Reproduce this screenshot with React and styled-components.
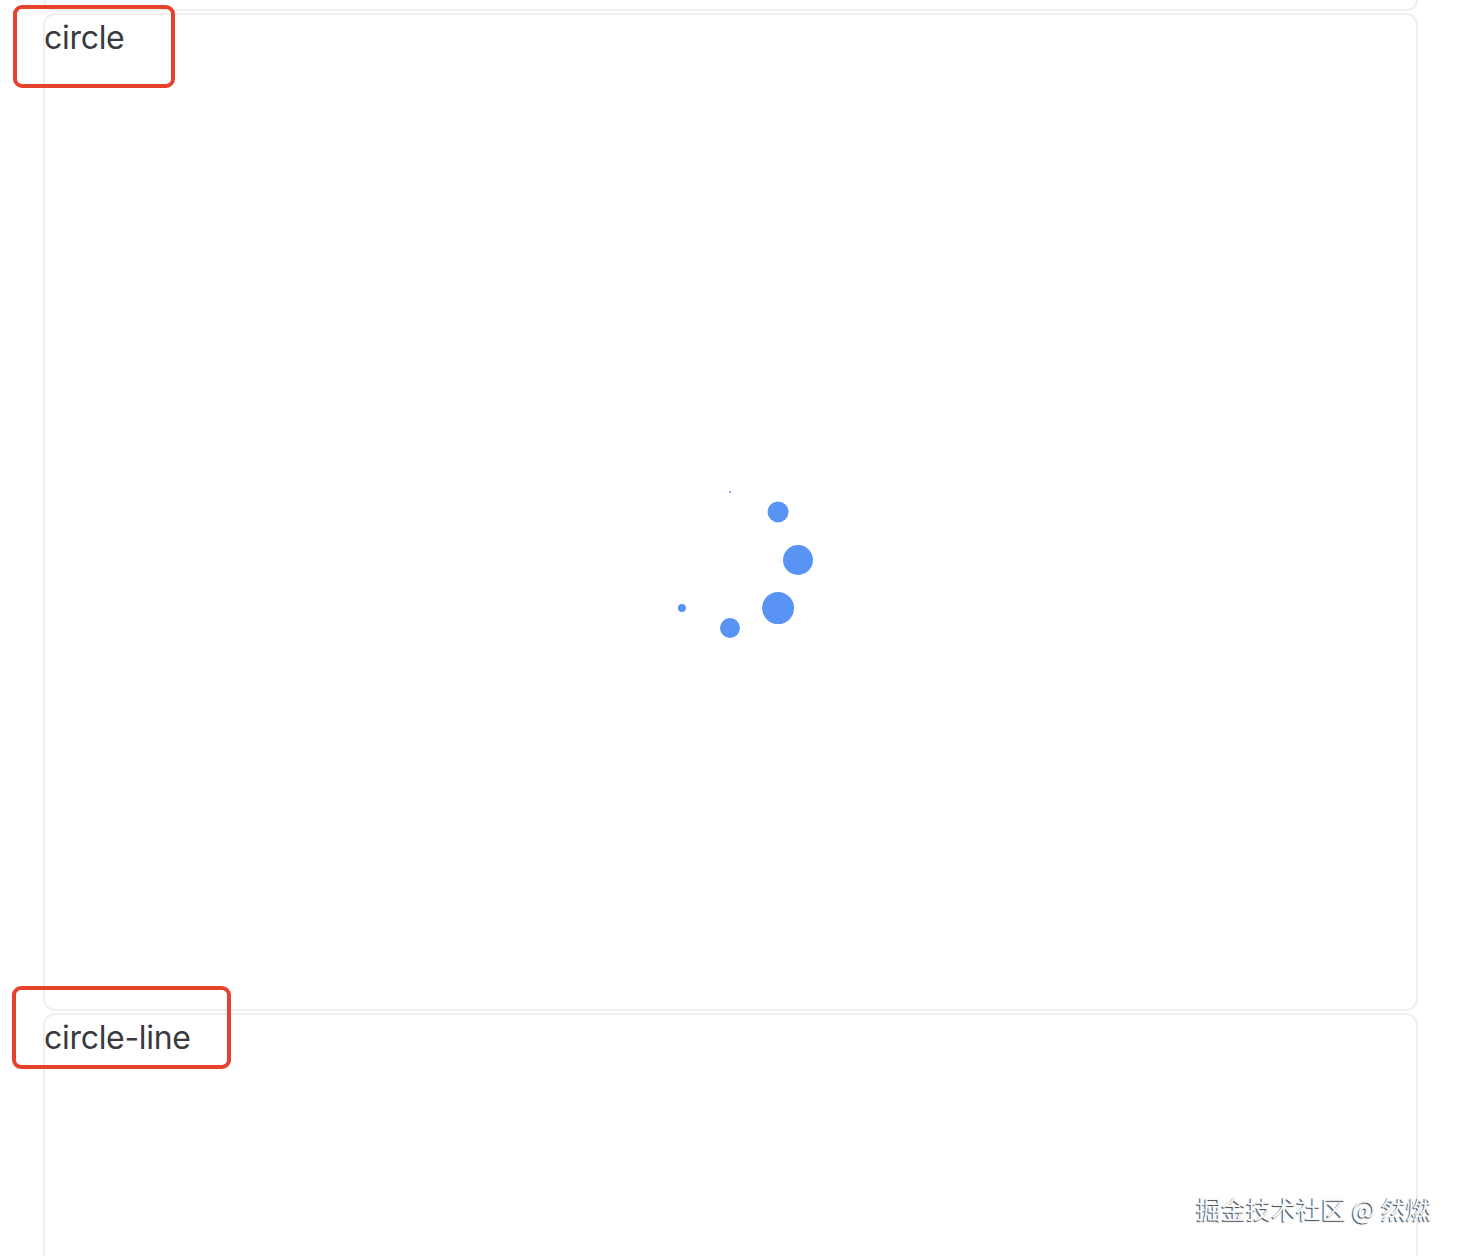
import React from 'react';
import styled, { createGlobalStyle } from 'styled-components';

const GlobalStyle = createGlobalStyle`
  html, body {
    margin: 0;
    padding: 0;
    background: #ffffff;
    overflow: hidden;
  }
  body {
    font-family: Inter, "Noto Sans", "Noto Sans CJK SC", sans-serif;
  }
`;

const Page = styled.div`
  position: relative;
  width: 1462px;
  height: 1256px;
  overflow: hidden;
  padding-left: 43px;
  box-sizing: border-box;
`;

const Stack = styled.div`
  display: flex;
  flex-direction: column;
  gap: 2px;
  width: 1375px;
`;

// bottom end of the card above, cut off by the top of the window
const CardTail = styled.div`
  height: 11px;
  box-sizing: border-box;
  border: 2px solid #efefef;
  border-top: none;
  border-radius: 0 0 12px 12px;
`;

const Card = styled.section`
  position: relative;
  display: flex;
  flex-direction: column;
  height: ${(p) => p.height}px;
  box-sizing: border-box;
  border: 2px solid #efefef;
  border-radius: 12px;
  flex-shrink: 0;
`;

const Title = styled.div`
  height: 94px;
  padding: 3px 0 0 0;
  margin-left: -1px;
  box-sizing: border-box;
  font-size: 32px;
  line-height: 40px;
  color: #3a3a3e;
  letter-spacing: -0.3px;
`;

const Stage = styled.div`
  flex: 1;
  display: flex;
  align-items: center;
  justify-content: center;
`;

const Marker = styled.div`
  position: absolute;
  left: ${(p) => p.left}px;
  top: ${(p) => p.top}px;
  width: ${(p) => p.width}px;
  height: 83px;
  box-sizing: border-box;
  border: 4px solid #e5432b;
  border-radius: 9px;
  pointer-events: none;
`;

const Watermark = styled.div`
  position: absolute;
  right: 31px;
  bottom: 33px;
  font-family: "Noto Sans CJK SC", "Noto Sans", sans-serif;
  font-size: 25px;
  line-height: 30px;
  color: #fafafa;
  text-shadow: -1px 1px 1px #3f3f3f, 1px -1px 0 #ffffff;
  white-space: nowrap;
`;

// radius 68, eight slots every 45deg, clockwise from the top
const dots = [1, 10.5, 15, 16, 10, 4, 0, 0];

const DotSpinner = () => (
  <svg width="180" height="180" viewBox="-89 -91 180 180">
    {dots.map((r, i) => {
      if (!r) return null;
      const a = (i * Math.PI) / 4;
      return (
        <circle
          key={i}
          cx={Math.sin(a) * 68}
          cy={-Math.cos(a) * 68}
          r={r}
          fill="#5994f5"
        />
      );
    })}
  </svg>
);

export default function App() {
  return (
    <Page>
      <GlobalStyle />
      <Stack>
        <CardTail />
        <Card height={998}>
          <Title>circle</Title>
          <Stage>
            <DotSpinner />
          </Stage>
          <Marker left={-32} top={-10} width={162} />
        </Card>
        <Card height={400}>
          <Title>circle-line</Title>
          <Stage />
          <Marker left={-33} top={-29} width={219} />
        </Card>
      </Stack>
      <Watermark>掘金技术社区 @ 然燃</Watermark>
    </Page>
  );
}
